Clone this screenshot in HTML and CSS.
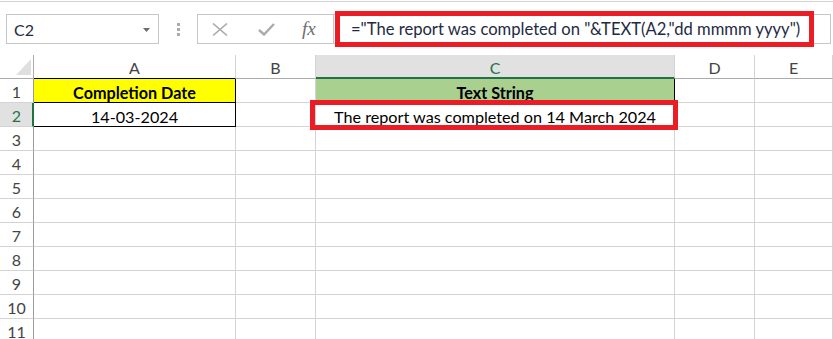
FILE: index.html
```html
<!DOCTYPE html>
<html lang="en">
<head>
    <meta charset="UTF-8">
    <title>TEXT function - report date</title>
    <link rel="stylesheet" href="styles.css">
</head>
<body>
    <div class="toolbar">
        <div class="name-box">
            <span>C2</span>
            <svg class="drop" width="7" height="4" viewBox="0 0 7 4"><polygon points="0,0 7,0 3.5,4" fill="#6d6d6d"/></svg>
        </div>
        <div class="grip"><i></i><i></i><i></i></div>
        <div class="fx-box">
            <svg width="16" height="13" viewBox="0 0 16 13"><path d="M1 0.5 L15 12.5 M15 0.5 L1 12.5" stroke="#ababab" stroke-width="1.6" fill="none"/></svg>
            <svg width="17" height="13" viewBox="0 0 17 13"><path d="M1 7 L6 11.5 L16 1" stroke="#ababab" stroke-width="2.4" fill="none"/></svg>
            <span class="fx">fx</span>
        </div>
        <div class="formula">
            <span>="The report was completed on "&amp;TEXT(A2,"dd mmmm yyyy")</span>
            <div class="mark"></div>
        </div>
    </div>

    <div class="sheet">
        <div class="head corner"><svg width="15" height="16" viewBox="0 0 15 16"><polygon points="15,0 15,16 0,16" fill="#dfdfdf"/></svg></div>
        <div class="head edge">A</div>
        <div class="head">B</div>
        <div class="head active-col">C</div>
        <div class="head">D</div>
        <div class="head">E</div>

        <div class="rownum">1</div>
        <div class="cell title yellow">Completion Date</div>
        <div class="cell"></div>
        <div class="cell title green">Text String</div>
        <div class="cell"></div>
        <div class="cell"></div>

        <div class="rownum active-row">2</div>
        <div class="cell boxed">14-03-2024</div>
        <div class="cell"></div>
        <div class="cell result">The report was completed on 14 March 2024<div class="mark"></div></div>
        <div class="cell"></div>
        <div class="cell"></div>

        <div class="rownum">3</div><div class="cell"></div><div class="cell"></div><div class="cell"></div><div class="cell"></div><div class="cell"></div>
        <div class="rownum">4</div><div class="cell"></div><div class="cell"></div><div class="cell"></div><div class="cell"></div><div class="cell"></div>
        <div class="rownum">5</div><div class="cell"></div><div class="cell"></div><div class="cell"></div><div class="cell"></div><div class="cell"></div>
        <div class="rownum">6</div><div class="cell"></div><div class="cell"></div><div class="cell"></div><div class="cell"></div><div class="cell"></div>
        <div class="rownum">7</div><div class="cell"></div><div class="cell"></div><div class="cell"></div><div class="cell"></div><div class="cell"></div>
        <div class="rownum">8</div><div class="cell"></div><div class="cell"></div><div class="cell"></div><div class="cell"></div><div class="cell"></div>
        <div class="rownum">9</div><div class="cell"></div><div class="cell"></div><div class="cell"></div><div class="cell"></div><div class="cell"></div>
        <div class="rownum">10</div><div class="cell"></div><div class="cell"></div><div class="cell"></div><div class="cell"></div><div class="cell"></div>
        <div class="rownum">11</div><div class="cell"></div><div class="cell"></div><div class="cell"></div><div class="cell"></div><div class="cell"></div>
    </div>
</body>
</html>
```

FILE: styles.css
```css
body {
    margin: 0;
    background: #fff;
    font-family: Lato, "Liberation Sans", sans-serif;
    color: #000;
    overflow: hidden;
}

/* formula bar */
.toolbar {
    margin-top: 1px;
    border-top: 1px solid #d4d4d4;
    height: 54px;
    display: flex;
    align-items: flex-start;
    padding: 12px 0 0 6px;
    box-sizing: border-box;
}
.name-box {
    width: 153px;
    height: 30px;
    box-sizing: border-box;
    border: 1px solid #c6c6c6;
    display: flex;
    align-items: center;
    justify-content: space-between;
    padding: 0 8px 0 7px;
    font-size: 16px;
    color: #1e2a44;
}
.name-box .drop {
    margin-top: 1px;
}
.grip {
    width: 38px;
    height: 30px;
    display: flex;
    flex-direction: column;
    align-items: center;
    justify-content: center;
    gap: 2px;
}
.grip i {
    width: 3px;
    height: 3px;
    background: #ababab;
}
.fx-box {
    width: 137px;
    height: 30px;
    box-sizing: border-box;
    border: 1px solid #c6c6c6;
    display: flex;
    align-items: center;
    padding: 0 0 0 14px;
    gap: 30px;
}
.fx-box .fx {
    font-family: "Liberation Serif", serif;
    font-style: italic;
    font-size: 19px;
    color: #6d6d6d;
    margin-left: -3px;
}
.formula {
    position: relative;
    width: 497px;
    height: 30px;
    box-sizing: border-box;
    border: 1px solid #c6c6c6;
    border-left: none;
    display: flex;
    align-items: center;
    padding-left: 17px;
    font-size: 16.6px;
    color: #1e2a44;
    white-space: nowrap;
}
.formula .mark {
    position: absolute;
    top: -4px;
    left: 1px;
    right: 16px;
    bottom: -4px;
    border: 5px solid #ec1c24;
}

/* sheet */
.sheet {
    display: grid;
    grid-template-columns: 34px 202px 80px 359px 80px 1fr;
    grid-auto-rows: 24px;
    font-size: 16.2px;
}
.head, .rownum, .cell {
    box-sizing: border-box;
    border-right: 1px solid #d4d4d4;
    border-bottom: 1px solid #d4d4d4;
    display: flex;
    align-items: center;
    justify-content: center;
    white-space: nowrap;
}
.head {
    border-bottom-color: #ababab;
    color: #444;
    font-size: 16px;
    padding-top: 1px;
}
.corner {
    border-right-color: #ababab;
    align-items: flex-end;
    justify-content: flex-end;
    padding: 0 2px 3px 0;
}
.head.edge {
    border-bottom-color: #000;
}
.active-col {
    background: #e1e1e1;
    color: #217346;
    border-bottom: 2px solid #217346;
    padding-top: 2px;
}
.rownum {
    border-right-color: #9b9b9b;
    color: #444;
    font-size: 16px;
    padding-top: 2px;
}
.active-row {
    background: #e1e1e1;
    color: #217346;
    border-right: 2px solid #217346;
    padding-left: 1px;
}
.cell {
    padding-top: 3px;
}
.title {
    font-weight: bold;
}
.yellow {
    background: #ffff00;
    border-right-color: #000;
    border-bottom-color: #000;
}
.green {
    background: #a9d08e;
    border-right-color: #000;
}
.boxed {
    border-right-color: #000;
    border-bottom-color: #000;
}
.result {
    position: relative;
}
.result .mark {
    position: absolute;
    top: -3px;
    left: -6px;
    right: -4px;
    bottom: -4px;
    border: 5px solid #ec1c24;
}
```
